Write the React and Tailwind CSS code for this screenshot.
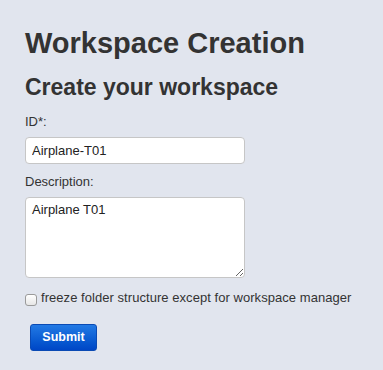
export default function App() {
  return (
    <div
      className="w-[383px] h-[370px] bg-[#e1e5ee] text-[#333333] pl-[25px] pt-[28px] overflow-hidden"
      style={{ fontFamily: '"Liberation Sans", Arial, Helvetica, sans-serif' }}
    >
      <h1 className="text-[29px] leading-[31px] font-bold">Workspace Creation</h1>
      <h2 className="mt-[15px] text-[23px] leading-[26px] font-bold">Create your workspace</h2>
      <form className="flex flex-col" onSubmit={(e) => e.preventDefault()}>
        <label className="mt-[14px] text-[13px] leading-[16px]">ID*:</label>
        <input
          defaultValue="Airplane-T01"
          className="mt-[7px] w-[220px] h-[27px] bg-white border border-[#c6c6c6] rounded-[4px] px-[6px] text-[13px] text-[#222] outline-none"
        />
        <label className="mt-[10px] text-[13px] leading-[16px]">Description:</label>
        <textarea
          defaultValue="Airplane T01"
          className="mt-[7px] w-[220px] h-[81px] bg-white border border-[#c6c6c6] rounded-[4px] px-[6px] pt-[4px] text-[13px] leading-[16px] text-[#222] outline-none"
        />
        <div className="mt-[12px] flex items-start">
          <span className="mt-[4px] w-[12px] h-[12px] rounded-[3px] border border-[#9a9a9a] bg-gradient-to-b from-[#ffffff] to-[#e6e6e6] shrink-0" />
          <span className="ml-[4px] text-[13px] leading-[16px] tracking-[0.05px]">freeze folder structure except for workspace manager</span>
        </div>
        <div className="mt-[18px] pl-[5px]">
          <button
            type="submit"
            className="w-[67px] h-[27px] rounded-[3px] border border-[#0a4ab4] bg-gradient-to-b from-[#2279e4] to-[#0046c6] text-white text-[12.5px] font-bold leading-none"
          >
            Submit
          </button>
        </div>
      </form>
    </div>
  );
}
